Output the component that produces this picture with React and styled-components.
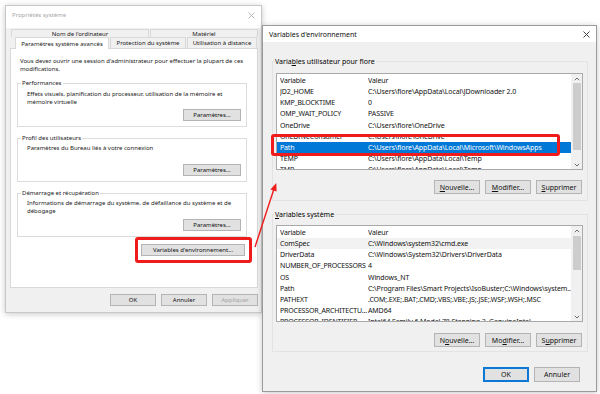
import React from 'react';
import styled, { createGlobalStyle } from 'styled-components';

const GlobalStyle = createGlobalStyle`
  html, body {
    margin: 0;
    padding: 0;
    background: #fff;
  }
  body {
    font-family: "Noto Sans", "Liberation Sans", sans-serif;
    color: #000;
  }
`;

const Desktop = styled.div`
  position: relative;
  width: 600px;
  height: 394px;
  overflow: hidden;
  background: #fff;
`;

const Window = styled.div`
  position: absolute;
  left: ${p => p.$left}px;
  top: ${p => p.$top}px;
  width: ${p => p.$width}px;
  height: ${p => p.$height}px;
  box-sizing: border-box;
  display: flex;
  flex-direction: column;
  background: #f0f0f0;
  border: 1px solid ${p => (p.$active ? '#9a9a9a' : '#c8c8c8')};
  box-shadow: 0 1px 6px rgba(0, 0, 0, 0.22);
  font-size: ${p => p.$font}px;
`;

const TitleBar = styled.div`
  height: ${p => p.$h}px;
  flex: none;
  box-sizing: border-box;
  display: flex;
  align-items: center;
  justify-content: space-between;
  padding: 0 6px ${p => p.$pb || 0}px 6px;
  background: #fff;
  color: ${p => (p.$active ? '#111' : '#a6a6a6')};
`;

const CloseIcon = ({ color }) => (
  <svg width="7" height="7" viewBox="0 0 7 7">
    <path d="M0.5 0.5 L6.5 6.5 M6.5 0.5 L0.5 6.5" stroke={color} strokeWidth="0.9" />
  </svg>
);

/* ---------- left window: Propriétés système ---------- */

const TabArea = styled.div`
  height: 20px;
  flex: none;
  box-sizing: border-box;
  padding-top: 1px;
  display: flex;
  flex-direction: column;
`;

const TabRow = styled.div`
  display: flex;
  height: ${p => p.$h}px;
  padding-left: ${p => p.$indent}px;
  position: relative;
  z-index: ${p => (p.$front ? 1 : 0)};
`;

const Tab = styled.div`
  width: ${p => p.$w}px;
  box-sizing: border-box;
  display: flex;
  align-items: center;
  justify-content: center;
  white-space: nowrap;
  border: 1px solid #d9d9d9;
  border-bottom: none;
  margin-right: 1px;
  background: ${p => (p.$selected ? '#fff' : '#f0f0f0')};
  color: #1a1a1a;
  height: ${p => (p.$selected ? 'calc(100% + 1px)' : '100%')};
`;

const Panel = styled.div`
  height: 240px;
  flex: none;
  box-sizing: border-box;
  margin: 0 3px 0 4px;
  padding: 8px 10px 0 6px;
  background: #fff;
  border: 1px solid #d9d9d9;
  display: flex;
  flex-direction: column;
  color: #1a1a1a;
`;

const Paragraph = styled.p`
  margin: 0 0 0 3px;
  line-height: 8px;
  min-height: ${p => p.$min || 0}px;
`;

const Group = styled.fieldset`
  margin: ${p => p.$mt}px 0 0 0;
  padding: ${p => p.$pt}px ${p => p.$pr}px ${p => p.$pb}px ${p => p.$pl}px;
  border: 1px solid ${p => p.$line || '#dcdcdc'};
  min-width: 0;
  display: flex;
  flex-direction: column;
`;

const Legend = styled.legend`
  padding: 0 1px;
  margin-left: ${p => p.$ml}px;
  line-height: ${p => p.$lh}px;
`;

const Button = styled.button`
  width: ${p => p.$w || 46}px;
  height: ${p => p.$h}px;
  flex: none;
  box-sizing: border-box;
  padding: 0;
  margin-top: ${p => p.$mt || 0}px;
  align-self: ${p => p.$align || 'auto'};
  margin-right: ${p => p.$mr || 0}px;
  font: inherit;
  line-height: 1;
  color: ${p => (p.disabled ? '#a3a3a3' : '#111')};
  background: #e1e1e1;
  border: 1px solid ${p => (p.$default ? '#0a78d4' : '#b4b4b4')};
  box-shadow: ${p => (p.$default ? 'inset 0 0 0 1px #0a78d4' : 'none')};
  white-space: nowrap;

  u {
    text-decoration-thickness: 0.6px;
    text-underline-offset: 1px;
  }
`;

const ButtonBar = styled.div`
  display: flex;
  justify-content: flex-end;
  gap: 5px;
  padding: ${p => p.$pt}px ${p => p.$pr}px 0 0;
  margin-top: ${p => p.$mt || 0}px;
`;

/* ---------- right window: Variables d'environnement ---------- */

const EnvBody = styled.div`
  flex: 1;
  display: flex;
  flex-direction: column;
  padding: 15px 8px 0 9px;
`;

const ListBox = styled.div`
  height: 97px;
  box-sizing: border-box;
  border: 1px solid #a9a9a9;
  background: #fff;
  display: flex;
  overflow: hidden;
`;

const ListContent = styled.div`
  flex: 1;
  min-width: 0;
  overflow: hidden;
`;

const ListRow = styled.div`
  display: flex;
  height: ${p => (p.$header ? 12 : 11.2)}px;
  align-items: center;
  padding-left: 3px;
  white-space: nowrap;
  color: ${p => (p.$state === 'focus' ? '#fff' : '#111')};
  background: ${p =>
    p.$state === 'focus' ? '#0078d7' : p.$state === 'muted' ? '#f2f2f2' : 'transparent'};
`;

const NameCell = styled.span`
  width: 88px;
  flex: none;
  overflow: hidden;
  letter-spacing: -0.15px;
  padding-right: 1px;
  box-sizing: border-box;
`;

const ValueCell = styled.span`
  flex: 1;
  min-width: 0;
  overflow: hidden;
  letter-spacing: -0.1px;
`;

const ScrollBar = styled.div`
  width: 11px;
  flex: none;
  background: #f0f0f0;
  display: flex;
  flex-direction: column;
`;

const ScrollArrow = styled.div`
  height: 9px;
  flex: none;
  display: flex;
  align-items: center;
  justify-content: center;
`;

const ScrollTrack = styled.div`
  flex: 1;
  display: flex;
  flex-direction: column;
  align-items: center;
`;

const Thumb = styled.div`
  width: 8px;
  margin-top: ${p => p.$offset}px;
  height: ${p => p.$size}px;
  background: #cdcdcd;
`;

const Chevron = ({ up }) => (
  <svg width="6" height="4" viewBox="0 0 6 4">
    <polyline
      points={up ? '0.8,3.2 3,1 5.2,3.2' : '0.8,0.8 3,3 5.2,0.8'}
      fill="none"
      stroke="#606060"
      strokeWidth="0.9"
    />
  </svg>
);

/* ---------- overlays ---------- */

const Highlight = styled.div`
  position: absolute;
  left: ${p => p.$x}px;
  top: ${p => p.$y}px;
  width: ${p => p.$w}px;
  height: ${p => p.$h}px;
  box-sizing: border-box;
  border: 3px solid #f01c1c;
  border-radius: 3px;
  pointer-events: none;
`;

const Overlay = styled.svg`
  position: absolute;
  left: 0;
  top: 0;
  pointer-events: none;
`;

const userVars = [
  ['JD2_HOME', 'C:\\Users\\flore\\AppData\\Local\\JDownloader 2.0'],
  ['KMP_BLOCKTIME', '0'],
  ['OMP_WAIT_POLICY', 'PASSIVE'],
  ['OneDrive', 'C:\\Users\\flore\\OneDrive'],
  ['OneDriveConsumer', 'C:\\Users\\flore\\OneDrive'],
  ['Path', 'C:\\Users\\flore\\AppData\\Local\\Microsoft\\WindowsApps', 'focus'],
  ['TEMP', 'C:\\Users\\flore\\AppData\\Local\\Temp'],
  ['TMP', 'C:\\Users\\flore\\AppData\\Local\\Temp'],
];

const systemVars = [
  ['ComSpec', 'C:\\Windows\\system32\\cmd.exe', 'muted'],
  ['DriverData', 'C:\\Windows\\System32\\Drivers\\DriverData'],
  ['NUMBER_OF_PROCESSORS', '4'],
  ['OS', 'Windows_NT'],
  ['Path', 'C:\\Program Files\\Smart Projects\\IsoBuster;C:\\Windows\\system...'],
  ['PATHEXT', '.COM;.EXE;.BAT;.CMD;.VBS;.VBE;.JS;.JSE;.WSF;.WSH;.MSC'],
  ['PROCESSOR_ARCHITECTU...', 'AMD64'],
  ['PROCESSOR_IDENTIFIER', 'Intel64 Family 6 Model 78 Stepping 3, GenuineIntel'],
];

const VarList = ({ rows, thumbOffset, thumbSize }) => (
  <ListBox>
    <ListContent>
      <ListRow $header>
        <NameCell>Variable</NameCell>
        <ValueCell>Valeur</ValueCell>
      </ListRow>
      {rows.map(([name, value, state]) => (
        <ListRow key={name + value} $state={state}>
          <NameCell>{name}</NameCell>
          <ValueCell>{value}</ValueCell>
        </ListRow>
      ))}
    </ListContent>
    <ScrollBar>
      <ScrollArrow><Chevron up /></ScrollArrow>
      <ScrollTrack>
        <Thumb $offset={thumbOffset} $size={thumbSize} />
      </ScrollTrack>
      <ScrollArrow><Chevron /></ScrollArrow>
    </ScrollBar>
  </ListBox>
);

const SystemProperties = () => (
  <Window $left={5} $top={5} $width={257} $height={308} $font={6}>
    <TitleBar $h={22} $pb={4}>
      <span>Propriétés système</span>
      <CloseIcon color="#b0b0b0" />
    </TitleBar>
    <TabArea>
      <TabRow $h={8} $indent={5}>
        <Tab $w={138}>Nom de l'ordinateur</Tab>
        <Tab $w={108}>Matériel</Tab>
      </TabRow>
      <TabRow $h={11} $indent={9} $front>
        <Tab $w={94} $selected>Paramètres système avancés</Tab>
        <Tab $w={76}>Protection du système</Tab>
        <Tab $w={70}>Utilisation à distance</Tab>
      </TabRow>
    </TabArea>
    <Panel>
      <Paragraph>
        Vous devez ouvrir une session d'administrateur pour effectuer la plupart de ces modifications.
      </Paragraph>
      <Group $mt={6} $pt={3} $pr={5} $pb={5} $pl={6}>
        <Legend $lh={8} $ml={-3}>Performances</Legend>
        <Paragraph as="div" $min={16}>
          Effets visuels, planification du processeur, utilisation de la mémoire et mémoire virtuelle
        </Paragraph>
        <Button $w={58} $h={12} $mt={3} $align="flex-end">Paramètres...</Button>
      </Group>
      <Group $mt={7} $pt={2} $pr={5} $pb={5} $pl={6}>
        <Legend $lh={8} $ml={-3}>Profil des utilisateurs</Legend>
        <Paragraph as="div" $min={16}>
          Paramètres du Bureau liés à votre connexion
        </Paragraph>
        <Button $w={58} $h={12} $mt={4} $align="flex-end">Paramètres...</Button>
      </Group>
      <Group $mt={7} $pt={2} $pr={5} $pb={5} $pl={6}>
        <Legend $lh={8} $ml={-3}>Démarrage et récupération</Legend>
        <Paragraph as="div" $min={16}>
          Informations de démarrage du système, de défaillance du système et de débogage
        </Paragraph>
        <Button $w={58} $h={12} $mt={4} $align="flex-end">Paramètres...</Button>
      </Group>
      <Button $w={104} $h={12} $mt={7} $mr={2} $align="flex-end">
        Variables d'environnement...
      </Button>
    </Panel>
    <ButtonBar $pt={6} $pr={3}>
      <Button $h={12}>OK</Button>
      <Button $h={12}>Annuler</Button>
      <Button $h={12} disabled>Appliquer</Button>
    </ButtonBar>
  </Window>
);

const EnvironmentVariables = () => (
  <Window $left={262} $top={25} $width={335} $height={367} $font={7} $active>
    <TitleBar $h={16} $active>
      <span>Variables d'environnement</span>
      <CloseIcon color="#333" />
    </TitleBar>
    <EnvBody>
      <Group $mt={0} $pt={7} $pr={4} $pb={6} $pl={3} $line="#e3e3e3">
        <Legend $lh={9} $ml={-2}>Varia<u>b</u>les utilisateur pour flore</Legend>
        <VarList rows={userVars} thumbOffset={0} thumbSize={67} />
        <ButtonBar $pt={0} $pr={1} $mt={10}>
          <Button $h={14}><u>N</u>ouvelle...</Button>
          <Button $h={14}><u>M</u>odifier...</Button>
          <Button $h={14}><u>S</u>upprimer</Button>
        </ButtonBar>
      </Group>
      <Group $mt={9} $pt={6} $pr={4} $pb={4} $pl={3} $line="#e3e3e3">
        <Legend $lh={9} $ml={-2}><u>V</u>ariables système</Legend>
        <VarList rows={systemVars} thumbOffset={1} thumbSize={34} />
        <ButtonBar $pt={0} $pr={1} $mt={11}>
          <Button $h={14}>N<u>o</u>uvelle...</Button>
          <Button $h={14}>Mo<u>d</u>ifier...</Button>
          <Button $h={14}>S<u>u</u>pprimer</Button>
        </ButtonBar>
      </Group>
      <ButtonBar $pt={0} $pr={8} $mt={15}>
        <Button $h={15} $default>OK</Button>
        <Button $h={15}>Annuler</Button>
      </ButtonBar>
    </EnvBody>
  </Window>
);

const Arrow = () => (
  <Overlay width="600" height="394" viewBox="0 0 600 394">
    <line x1="255" y1="247" x2="273.6" y2="190" stroke="#f01c1c" strokeWidth="1.4" />
    <polygon points="276.3,183 276.6,191.6 270.4,189.6" fill="#f01c1c" />
  </Overlay>
);

export default function App() {
  return (
    <Desktop>
      <GlobalStyle />
      <SystemProperties />
      <EnvironmentVariables />
      <Highlight $x={135} $y={237} $w={117} $h={26} />
      <Highlight $x={271} $y={134} $w={289} $h={22} />
      <Arrow />
    </Desktop>
  );
}
